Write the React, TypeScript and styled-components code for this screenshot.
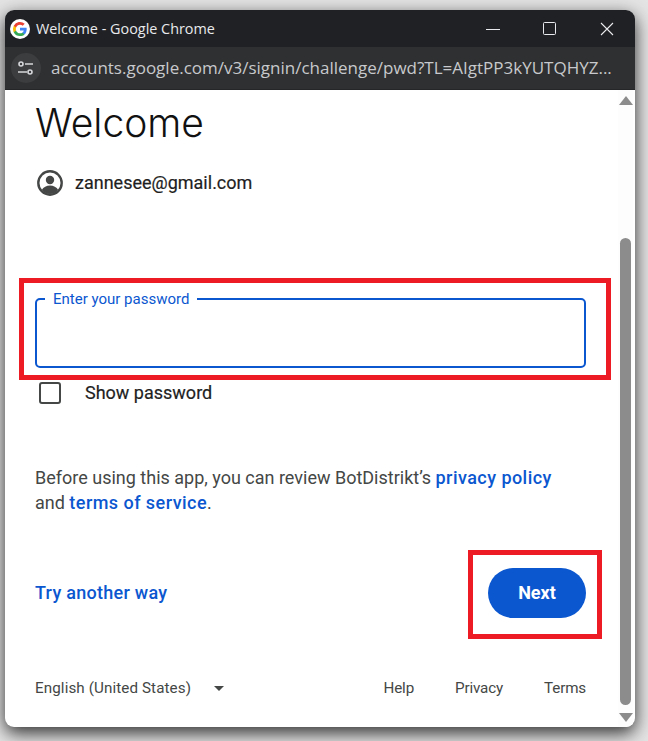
import * as React from 'react';
import styled, {createGlobalStyle} from 'styled-components';

const GlobalStyle = createGlobalStyle`
    html, body {
        margin: 0;
        padding: 0;
        width: 648px;
        height: 741px;
        overflow: hidden;
        background: #cfcfcf;
    }
    * {
        box-sizing: border-box;
    }
`
const Desktop = styled.div`
    width: 648px;
    height: 741px;
    padding: 10px 13px 14px 5px;
    background: #e4e4e4;
    font-family: Roboto, "Liberation Sans", sans-serif;
`
const Window = styled.div`
    height: 717px;
    display: flex;
    flex-direction: column;
    border-radius: 9px;
    overflow: hidden;
    background: #fff;
    box-shadow: 0 6px 18px rgba(0, 0, 0, 0.8);
`
const TitleBar = styled.div`
    height: 37px;
    flex: none;
    display: flex;
    align-items: center;
    padding-left: 5px;
    background: #202124;
    color: #e8eaed;
    font-family: "Open Sans", sans-serif;
    font-size: 14.4px;
`
const TitleText = styled.span`
    margin-left: 6px;
    flex: 1;
`
const WindowButton = styled.div`
    width: 57px;
    height: 37px;
    display: flex;
    align-items: center;
    justify-content: center;
`
const AddressBar = styled.div`
    height: 43px;
    flex: none;
    display: flex;
    align-items: center;
    padding: 0 0 1px 6px;
    background: #2f3031;
    border-bottom: 1px solid #252628;
    color: #c7c9cc;
    font-family: "Open Sans", sans-serif;
    font-size: 17px;
`
const TuneButton = styled.div`
    width: 30px;
    height: 30px;
    border-radius: 50%;
    background: #3c3d3e;
    display: flex;
    align-items: center;
    justify-content: center;
    margin-right: 10px;
`
const Body = styled.div`
    flex: 1;
    min-height: 0;
    display: flex;
`
const Main = styled.div`
    flex: 1;
    display: flex;
    flex-direction: column;
    padding: 9px 32px 0 30px;
`
const Heading = styled.h1`
    margin: 0;
    height: 47px;
    line-height: 47px;
    font-family: Inter, sans-serif;
    font-size: 39px;
    font-weight: 300;
    color: #111;
`
const Account = styled.div`
    display: flex;
    align-items: center;
    gap: 12px;
    margin: 23px 0 0 2px;
    height: 28px;
    font-size: 18px;
    color: #1f1f1f;
`
const RowText = styled.span`
    padding-bottom: 2px;
    -webkit-text-stroke: 0.2px currentColor;
`
const Field = styled.div`
    position: relative;
    margin-top: 101px;
    height: 70px;
    border: 2px solid #0b57d0;
    border-radius: 5px;
`
const FieldLabel = styled.span`
    position: absolute;
    left: 8px;
    top: -9px;
    padding: 0 8px;
    background: #fff;
    color: #0b57d0;
    font-size: 15px;
    line-height: 16px;
`
const Annotation = styled.div<{$inset: string}>`
    position: absolute;
    inset: ${props => props.$inset};
    border: 5px solid #ed1c24;
    pointer-events: none;
`
const ShowRow = styled.div`
    display: flex;
    align-items: center;
    margin: 10px 0 0 4px;
    height: 30px;
    font-size: 18px;
    color: #1f1f1f;
`
const Checkbox = styled.div`
    width: 22px;
    height: 22px;
    border: 2px solid #444746;
    border-radius: 3px;
    margin-right: 24px;
`
const Consent = styled.p`
    margin: 57px 0 0;
    font-size: 18px;
    line-height: 25px;
    color: #444746;
`
const Link = styled.a`
    color: #0b57d0;
    font-weight: 500;
    letter-spacing: 0.45px;
`
const Actions = styled.div`
    display: flex;
    align-items: center;
    justify-content: space-between;
    margin-top: 53px;
    height: 50px;
`
const TextLink = styled.a`
    padding-bottom: 2px;
    color: #0b57d0;
    font-size: 18px;
    font-weight: 500;
    letter-spacing: 0.27px;
`
const NextWrap = styled.div`
    position: relative;
`
const NextButton = styled.button`
    display: block;
    width: 98px;
    height: 50px;
    padding-bottom: 2px;
    border: none;
    border-radius: 25px;
    background: #0b57d0;
    color: #fff;
    font-family: inherit;
    font-size: 18px;
    font-weight: 700;
`
const Footer = styled.div`
    display: flex;
    align-items: center;
    margin-top: 61px;
    font-size: 15.2px;
    color: #444746;
`
const Language = styled.span`
    flex: 1;
    display: flex;
    align-items: center;
    gap: 23px;
    letter-spacing: 0.1px;
`
const Caret = styled.i`
    width: 0;
    height: 0;
    border-left: 5px solid transparent;
    border-right: 5px solid transparent;
    border-top: 5px solid #444746;
`
const FooterLink = styled.a`
    margin-left: 41px;
    letter-spacing: -0.15px;
`
const ScrollBar = styled.div`
    width: 15px;
    margin-right: 2px;
    flex: none;
    display: flex;
    flex-direction: column;
    align-items: center;
    background: #fdfdfd;
`
const ArrowUp = styled.i`
    margin-top: 6px;
    width: 0;
    height: 0;
    border-left: 7px solid transparent;
    border-right: 7px solid transparent;
    border-bottom: 9px solid #8c8c8c;
`
const ArrowDown = styled.i`
    margin-top: 8px;
    width: 0;
    height: 0;
    border-left: 7px solid transparent;
    border-right: 7px solid transparent;
    border-top: 9px solid #8c8c8c;
`
const Thumb = styled.div`
    width: 11px;
    height: 467px;
    margin-top: 133px;
    border-radius: 6px;
    background: #8c8c8c;
`

const GoogleLogo = () => (
    <svg width="20" height="20" viewBox="0 0 48 48">
        <circle cx="24" cy="24" r="24" fill="#fff"/>
        <path fill="#4285F4" d="M40 24.5c0-1.2-.1-2.3-.3-3.4H24v6.5h9a7.7 7.7 0 0 1-3.3 5v4.2h5.4C38.200 34 40 29.700 40 24.500z"/>
        <path fill="#34A853" d="M24 41c4.500 0 8.300-1.500 11.100-4.100l-5.400-4.200c-1.500 1-3.400 1.600-5.700 1.600-4.400 0-8.100-3-9.400-6.900H9v4.300A17 17 0 0 0 24 41z"/>
        <path fill="#FBBC05" d="M14.600 27.400a10 10 0 0 1 0-6.800v-4.300H9a17 17 0 0 0 0 15.400l5.600-4.300z"/>
        <path fill="#EA4335" d="M24 13.700c2.500 0 4.700.9 6.500 2.500l4.800-4.800A17 17 0 0 0 9 16.300l5.600 4.300c1.300-3.900 5-6.900 9.400-6.900z"/>
    </svg>
);

const TuneIcon = () => (
    <svg width="18" height="16" viewBox="0 0 18 16" fill="none" stroke="#d5d7da" strokeWidth="1.6">
        <circle cx="4" cy="4" r="2"/>
        <path d="M8 4h8"/>
        <circle cx="13" cy="12" r="2"/>
        <path d="M1 12h9"/>
    </svg>
);

const AccountIcon = () => (
    <svg width="26" height="26" viewBox="0 0 26 26">
        <circle cx="13" cy="13" r="11.700" fill="none" stroke="#444746" strokeWidth="2.400"/>
        <circle cx="13" cy="10" r="4.200" fill="#444746"/>
        <path fill="#444746" d="M4.800 20c1.500-3 4.800-4.500 8.200-4.500s6.700 1.500 8.200 4.500A11 11 0 0 1 13 24a11 11 0 0 1-8.200-4z"/>
    </svg>
);

class App extends React.Component {
    render() {
        return (
            <>
            <GlobalStyle/>
            <Desktop>
                <Window>
                    <TitleBar>
                        <GoogleLogo/>
                        <TitleText>Welcome - Google Chrome</TitleText>
                        <WindowButton>
                            <svg width="14" height="14" viewBox="0 0 14 14" stroke="#e8eaed"><path d="M0 7.500h14"/></svg>
                        </WindowButton>
                        <WindowButton>
                            <svg width="14" height="14" viewBox="0 0 14 14" fill="none" stroke="#e8eaed"><rect x="0.500" y="0.500" width="12" height="12" rx="1"/></svg>
                        </WindowButton>
                        <WindowButton>
                            <svg width="14" height="14" viewBox="0 0 14 14" stroke="#e8eaed" strokeWidth="1.100"><path d="M1 1l12 12M13 1L1 13"/></svg>
                        </WindowButton>
                    </TitleBar>
                    <AddressBar>
                        <TuneButton><TuneIcon/></TuneButton>
                        accounts.google.com/v3/signin/challenge/pwd?TL=AIgtPP3kYUTQHYZ...
                    </AddressBar>
                    <Body>
                        <Main>
                            <Heading>Welcome</Heading>
                            <Account><AccountIcon/><RowText>zannesee@gmail.com</RowText></Account>
                            <Field>
                                <FieldLabel>Enter your password</FieldLabel>
                                <Annotation $inset="-22px -27px -14px -18px"/>
                            </Field>
                            <ShowRow><Checkbox/><RowText>Show password</RowText></ShowRow>
                            <Consent>
                                Before using this app, you can review BotDistrikt’s <Link>privacy policy</Link><br/>
                                and <Link>terms of service</Link>.
                            </Consent>
                            <Actions>
                                <TextLink>Try another way</TextLink>
                                <NextWrap>
                                    <NextButton>Next</NextButton>
                                    <Annotation $inset="-18px -16px -21px -20px"/>
                                </NextWrap>
                            </Actions>
                            <Footer>
                                <Language>English (United States)<Caret/></Language>
                                <FooterLink>Help</FooterLink>
                                <FooterLink>Privacy</FooterLink>
                                <FooterLink>Terms</FooterLink>
                            </Footer>
                        </Main>
                        <ScrollBar>
                            <ArrowUp/>
                            <Thumb/>
                            <ArrowDown/>
                        </ScrollBar>
                    </Body>
                </Window>
            </Desktop>
            </>
        )
    }
}

export default App;
